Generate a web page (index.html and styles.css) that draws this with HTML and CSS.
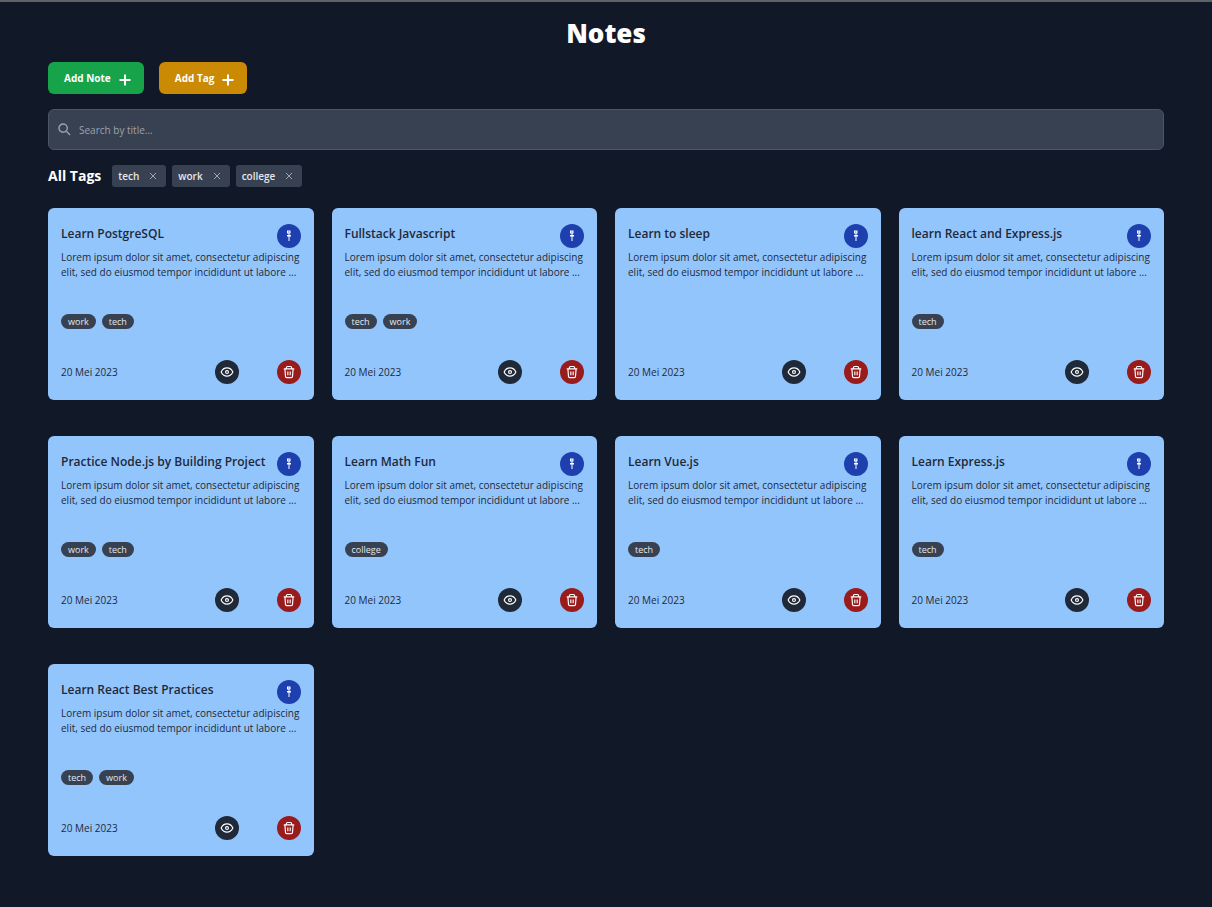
FILE: index.html
```
<!DOCTYPE html>
<html lang="en">
<head>
<meta charset="utf-8">
<meta name="viewport" content="width=device-width, initial-scale=1">
<title>Notes</title>
<link rel="stylesheet" href="styles.css">
</head>
<body>
<svg class="sprite" aria-hidden="true">
  <symbol id="pin" viewBox="0 0 12 14"><path fill-rule="evenodd" d="M4 1.500h3.500v3H6.500V6H8v1.500H6.500V12h-1V7.500H4V6h1.500V4.500H4zM5.300 2.500v1h1v-1z"/></symbol>
  <symbol id="eye" viewBox="0 0 24 24"><path d="M2 12c2-4.500 5.500-7 10-7s8 2.500 10 7c-2 4.500-5.500 7-10 7s-8-2.500-10-7z"/><circle cx="12" cy="12" r="2.500"/></symbol>
  <symbol id="trash" viewBox="0 0 24 24"><path d="M3 6.500h18M7.500 6V4.500Q7.500 2.500 9.500 2.500h5q2 0 2 2V6M5 7l1 12.500q.2 2 2 2h8q1.800 0 2-2L19 7M10 11v6.500M14 11v6.500"/></symbol>
  <symbol id="plus" viewBox="0 0 12 12"><path d="M6 0.500v11M0.500 6h11"/></symbol>
  <symbol id="close" viewBox="0 0 8 8"><path d="M1 1l6 6M7 1l-6 6"/></symbol>
  <symbol id="search" viewBox="0 0 14 14"><circle cx="5.500" cy="5.500" r="4.500"/><path d="M9 9l4 4"/></symbol>
</svg>
<main class="page">
  <h1 class="page-title">Notes</h1>
  <div class="actions">
    <button class="btn btn-note" type="button">Add Note <svg class="plus"><use href="#plus"/></svg></button>
    <button class="btn btn-tag" type="button">Add Tag <svg class="plus"><use href="#plus"/></svg></button>
  </div>
  <label class="search">
    <svg class="search-icon" aria-hidden="true"><use href="#search"/></svg>
    <input class="search-input" type="search" placeholder="Search by title..." aria-label="Search by title">
  </label>
  <section class="filters">
    <h2 class="filters-title">All Tags</h2>
    <span class="filter">tech <button class="remove" type="button" aria-label="Remove tech"><svg class="close"><use href="#close"/></svg></button></span>
    <span class="filter">work <button class="remove" type="button" aria-label="Remove work"><svg class="close"><use href="#close"/></svg></button></span>
    <span class="filter">college <button class="remove" type="button" aria-label="Remove college"><svg class="close"><use href="#close"/></svg></button></span>
  </section>
  <section class="grid">
    <article class="card">
      <header class="card-head"><h3 class="card-title">Learn PostgreSQL</h3><button class="round pin" type="button" aria-label="Pin"><svg class="icon-pin"><use href="#pin"/></svg></button></header>
      <p class="card-text">Lorem ipsum dolor sit amet, consectetur adipiscing elit, sed do eiusmod tempor incididunt ut labore ...</p>
      <div class="tags"><span class="tag">work</span><span class="tag">tech</span></div>
      <footer class="card-foot"><time class="date">20 Mei 2023</time><button class="round view" type="button" aria-label="View"><svg class="icon"><use href="#eye"/></svg></button><button class="round delete" type="button" aria-label="Delete"><svg class="icon"><use href="#trash"/></svg></button></footer>
    </article>
    <article class="card">
      <header class="card-head"><h3 class="card-title">Fullstack Javascript</h3><button class="round pin" type="button" aria-label="Pin"><svg class="icon-pin"><use href="#pin"/></svg></button></header>
      <p class="card-text">Lorem ipsum dolor sit amet, consectetur adipiscing elit, sed do eiusmod tempor incididunt ut labore ...</p>
      <div class="tags"><span class="tag">tech</span><span class="tag">work</span></div>
      <footer class="card-foot"><time class="date">20 Mei 2023</time><button class="round view" type="button" aria-label="View"><svg class="icon"><use href="#eye"/></svg></button><button class="round delete" type="button" aria-label="Delete"><svg class="icon"><use href="#trash"/></svg></button></footer>
    </article>
    <article class="card">
      <header class="card-head"><h3 class="card-title">Learn to sleep</h3><button class="round pin" type="button" aria-label="Pin"><svg class="icon-pin"><use href="#pin"/></svg></button></header>
      <p class="card-text">Lorem ipsum dolor sit amet, consectetur adipiscing elit, sed do eiusmod tempor incididunt ut labore ...</p>
      <div class="tags"></div>
      <footer class="card-foot"><time class="date">20 Mei 2023</time><button class="round view" type="button" aria-label="View"><svg class="icon"><use href="#eye"/></svg></button><button class="round delete" type="button" aria-label="Delete"><svg class="icon"><use href="#trash"/></svg></button></footer>
    </article>
    <article class="card">
      <header class="card-head"><h3 class="card-title">learn React and Express.js</h3><button class="round pin" type="button" aria-label="Pin"><svg class="icon-pin"><use href="#pin"/></svg></button></header>
      <p class="card-text">Lorem ipsum dolor sit amet, consectetur adipiscing elit, sed do eiusmod tempor incididunt ut labore ...</p>
      <div class="tags"><span class="tag">tech</span></div>
      <footer class="card-foot"><time class="date">20 Mei 2023</time><button class="round view" type="button" aria-label="View"><svg class="icon"><use href="#eye"/></svg></button><button class="round delete" type="button" aria-label="Delete"><svg class="icon"><use href="#trash"/></svg></button></footer>
    </article>
    <article class="card">
      <header class="card-head"><h3 class="card-title">Practice Node.js by Building Project</h3><button class="round pin" type="button" aria-label="Pin"><svg class="icon-pin"><use href="#pin"/></svg></button></header>
      <p class="card-text">Lorem ipsum dolor sit amet, consectetur adipiscing elit, sed do eiusmod tempor incididunt ut labore ...</p>
      <div class="tags"><span class="tag">work</span><span class="tag">tech</span></div>
      <footer class="card-foot"><time class="date">20 Mei 2023</time><button class="round view" type="button" aria-label="View"><svg class="icon"><use href="#eye"/></svg></button><button class="round delete" type="button" aria-label="Delete"><svg class="icon"><use href="#trash"/></svg></button></footer>
    </article>
    <article class="card">
      <header class="card-head"><h3 class="card-title">Learn Math Fun</h3><button class="round pin" type="button" aria-label="Pin"><svg class="icon-pin"><use href="#pin"/></svg></button></header>
      <p class="card-text">Lorem ipsum dolor sit amet, consectetur adipiscing elit, sed do eiusmod tempor incididunt ut labore ...</p>
      <div class="tags"><span class="tag">college</span></div>
      <footer class="card-foot"><time class="date">20 Mei 2023</time><button class="round view" type="button" aria-label="View"><svg class="icon"><use href="#eye"/></svg></button><button class="round delete" type="button" aria-label="Delete"><svg class="icon"><use href="#trash"/></svg></button></footer>
    </article>
    <article class="card">
      <header class="card-head"><h3 class="card-title">Learn Vue.js</h3><button class="round pin" type="button" aria-label="Pin"><svg class="icon-pin"><use href="#pin"/></svg></button></header>
      <p class="card-text">Lorem ipsum dolor sit amet, consectetur adipiscing elit, sed do eiusmod tempor incididunt ut labore ...</p>
      <div class="tags"><span class="tag">tech</span></div>
      <footer class="card-foot"><time class="date">20 Mei 2023</time><button class="round view" type="button" aria-label="View"><svg class="icon"><use href="#eye"/></svg></button><button class="round delete" type="button" aria-label="Delete"><svg class="icon"><use href="#trash"/></svg></button></footer>
    </article>
    <article class="card">
      <header class="card-head"><h3 class="card-title">Learn Express.js</h3><button class="round pin" type="button" aria-label="Pin"><svg class="icon-pin"><use href="#pin"/></svg></button></header>
      <p class="card-text">Lorem ipsum dolor sit amet, consectetur adipiscing elit, sed do eiusmod tempor incididunt ut labore ...</p>
      <div class="tags"><span class="tag">tech</span></div>
      <footer class="card-foot"><time class="date">20 Mei 2023</time><button class="round view" type="button" aria-label="View"><svg class="icon"><use href="#eye"/></svg></button><button class="round delete" type="button" aria-label="Delete"><svg class="icon"><use href="#trash"/></svg></button></footer>
    </article>
    <article class="card">
      <header class="card-head"><h3 class="card-title">Learn React Best Practices</h3><button class="round pin" type="button" aria-label="Pin"><svg class="icon-pin"><use href="#pin"/></svg></button></header>
      <p class="card-text">Lorem ipsum dolor sit amet, consectetur adipiscing elit, sed do eiusmod tempor incididunt ut labore ...</p>
      <div class="tags"><span class="tag">tech</span><span class="tag">work</span></div>
      <footer class="card-foot"><time class="date">20 Mei 2023</time><button class="round view" type="button" aria-label="View"><svg class="icon"><use href="#eye"/></svg></button><button class="round delete" type="button" aria-label="Delete"><svg class="icon"><use href="#trash"/></svg></button></footer>
    </article>
  </section>
</main>
</body>
</html>
```
FILE: styles.css
```
* { box-sizing: border-box; }
body {
  margin: 0;
  min-height: 100vh;
  border-top: 2px solid #5f6368;
  background: #111827;
  color: #fff;
  font-family: "Segoe UI", "Open Sans", "Noto Sans", sans-serif;
  font-size: 10px;
}
h1, h2, h3, p { margin: 0; }
button { font: inherit; border: 0; cursor: pointer; }
.sprite { display: none; }
.page { padding: 14px 48px 48px; }
.page-title { text-align: center; font-size: 26px; line-height: 34px; font-weight: 800; }
.actions { display: flex; gap: 15px; margin-top: 12px; }
.btn {
  display: flex;
  align-items: center;
  gap: 8px;
  height: 32px;
  padding: 0 13px 0 16px;
  border-radius: 6px;
  color: #fff;
  font-weight: 700;
}
.btn-note { background: #16a34a; }
.btn-tag { background: #ca8a04; }
.plus { width: 12px; height: 12px; margin-top: 4px; stroke: #fff; stroke-width: 2; }
.search {
  display: flex;
  align-items: center;
  gap: 8px;
  height: 41px;
  margin-top: 15px;
  padding: 0 9px;
  border: 1px solid #4b5563;
  border-radius: 6px;
  background: #374151;
}
.search-icon { width: 13px; height: 13px; fill: none; stroke: #9ca3af; stroke-width: 1.5; }
.search-input { flex: 1; border: 0; outline: 0; padding: 0; background: none; color: #fff; font: inherit; }
.search-input::placeholder { color: #9ca3af; }
.filters { display: flex; align-items: center; gap: 6px; margin-top: 15px; }
.filters-title { margin-right: 5px; font-size: 14px; line-height: 20px; font-weight: 700; }
.filter {
  display: flex;
  align-items: center;
  gap: 10px;
  height: 22px;
  padding: 0 9px 0 6px;
  border-radius: 3px;
  background: #374151;
  color: #e5e7eb;
  font-weight: 600;
}
.remove { display: flex; padding: 0; background: none; }
.close { width: 8px; height: 8px; stroke: #9ca3af; stroke-width: 1; }
.grid {
  display: grid;
  grid-template-columns: repeat(4, minmax(0, 1fr));
  gap: 36px 18px;
  margin-top: 21px;
}
.card { padding: 16px 13px; border-radius: 6px; background: #93c5fd; color: #1f2937; }
.card-head { display: flex; justify-content: space-between; height: 26px; }
.card-title { font-size: 12px; line-height: 20px; font-weight: 600; white-space: nowrap; }
.round {
  display: flex;
  flex: none;
  align-items: center;
  justify-content: center;
  width: 24px;
  height: 24px;
  padding: 0;
  border-radius: 50%;
  color: #fff;
}
.pin { background: #1e40af; }
.view { background: #1f2937; }
.delete { background: #991b1b; }
.icon { width: 14px; height: 14px; fill: none; stroke: #fff; stroke-width: 2; }
.icon-pin { width: 12px; height: 14px; fill: #fff; }
.card-text { height: 64px; line-height: 15px; }
.tags { display: flex; gap: 6px; height: 15px; }
.tag {
  padding: 0 7px;
  border-radius: 8px;
  background: #374151;
  color: #e5e7eb;
  font-size: 9px;
  line-height: 16px;
}
.card-foot { display: flex; align-items: center; gap: 38px; margin-top: 31px; }
.date { flex: 1; }
```
